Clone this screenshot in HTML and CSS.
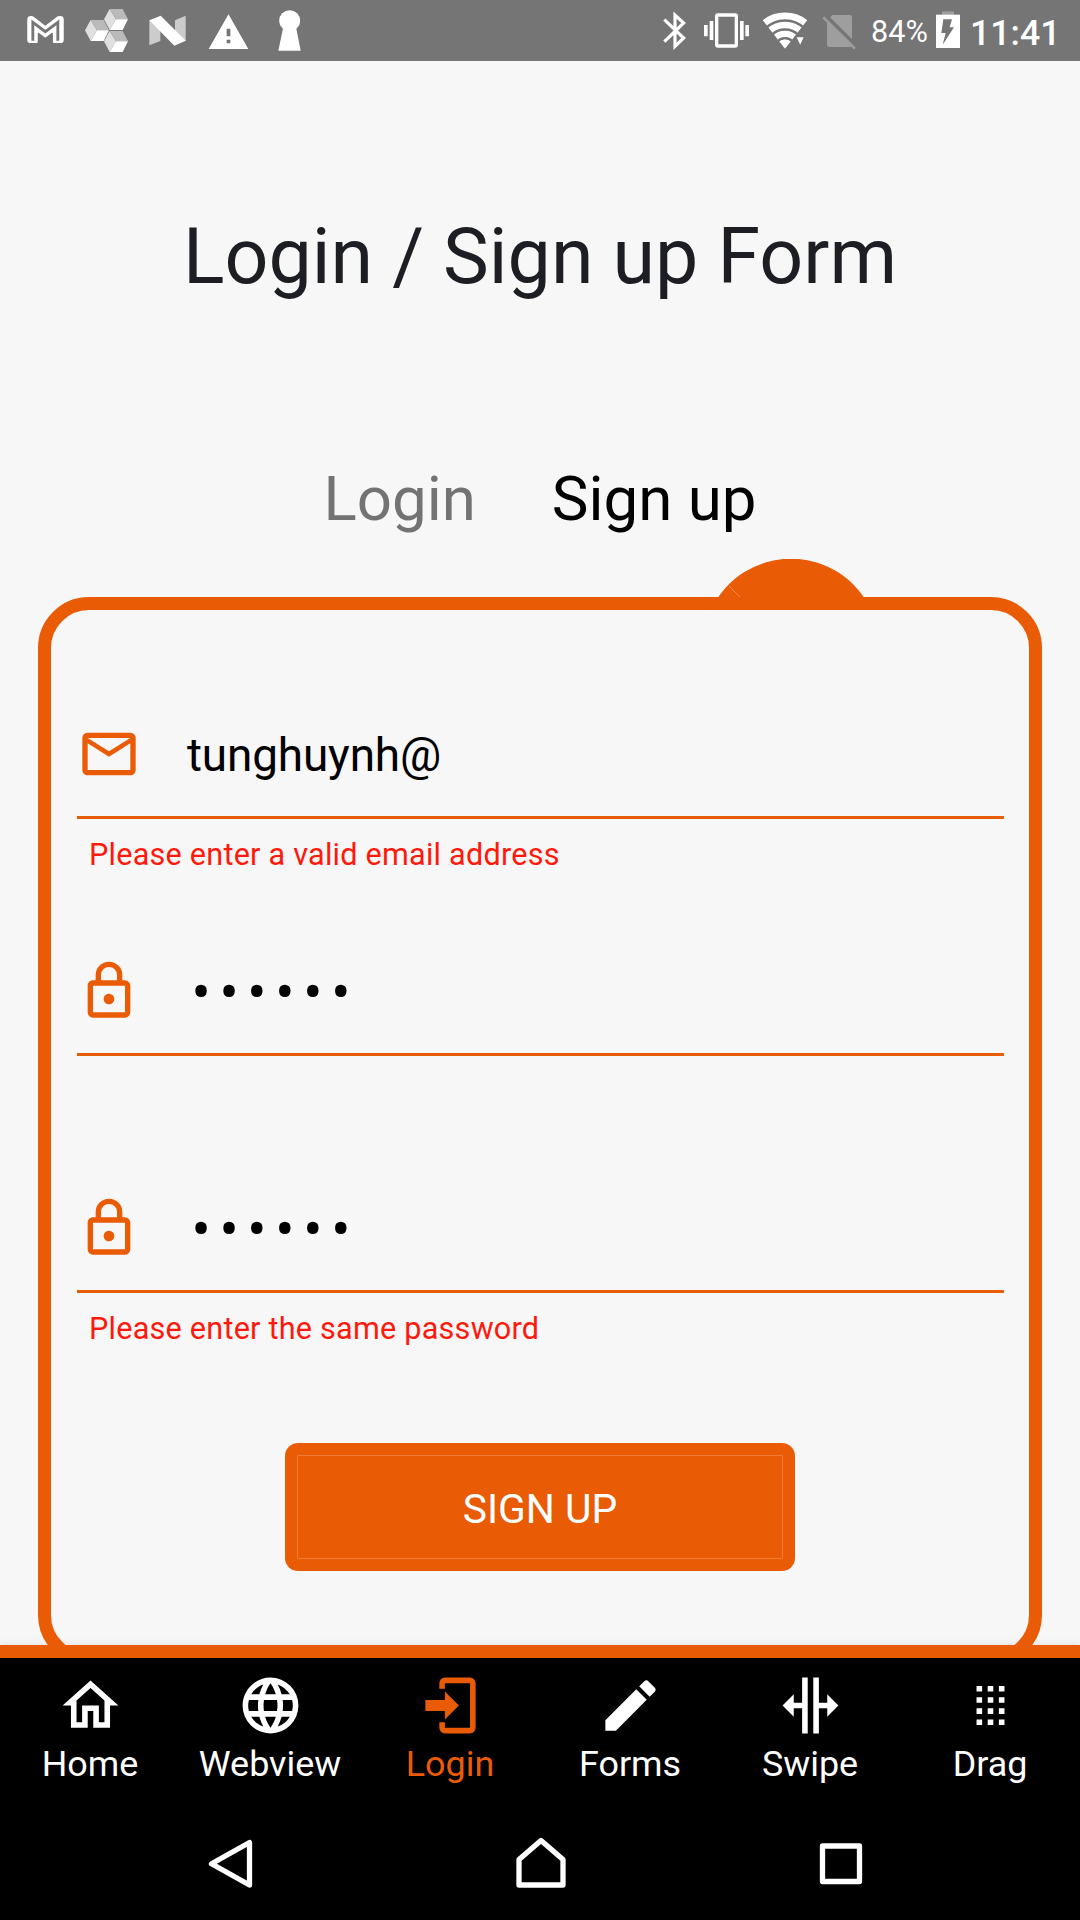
FILE: index.html
```
<!DOCTYPE html>
<html lang="en">
<head>
<meta charset="utf-8">
<title>Login / Sign up Form</title>
<link rel="stylesheet" href="styles.css">
</head>
<body>
<header class="status-bar">
  <div class="notifications">
    <svg class="s-mail" viewBox="81 0 111 183"><path d="M110 126H91Q85 126 85 120V58Q85 51 93 51L98 52L136 81L174 52L180 51Q188 51 188 58V120Q188 126 182 126H162V90L136 109L110 90Z" fill="#fff" stroke="#fff" stroke-width="6.5" stroke-linejoin="round"/><path d="M98.500 122V67L136 95L173.500 67V122" fill="none" stroke="#757575" stroke-width="8.500"/></svg>
    <svg class="s-cubes" viewBox="255 0 129 183"><defs><g id="cube"><path fill="#e0e0e0" d="M329 27L312 58L329 90L348 58Z"/><path fill="#bababa" d="M329 27H368L384 58H348Z"/><path fill="#fff" d="M348 58H384L368 90H329Z"/></g></defs><use href="#cube"/><use href="#cube" x="-57" y="33"/><use href="#cube" y="66"/></svg>
    <svg class="s-n" viewBox="447 0 111 183"><path fill="#ccc" d="M448 60L481 76V123L448 136ZM557 47L525 61V105L557 124Z"/><path fill="#fff" d="M448 61L482 47L557 122L523 137Z"/></svg>
    <svg class="s-warn" viewBox="624 0 123 183"><path fill="#fff" d="M685.500 43L745 147H626Z"/><path fill="#757575" d="M680 86h11v23h-11zM680 119h11v11h-11z"/></svg>
    <svg class="s-key" viewBox="834 0 69 183"><circle cx="869" cy="62" r="31.500" fill="#fff"/><path fill="#fff" d="M851 76H887L902 152H835Z"/></svg>
  </div>
  <div class="system">
    <svg class="s-bt" viewBox="69 0 69 183"><path d="M73 59L131 114L105 139V45L131 69L73 125" fill="none" stroke="#fff" stroke-width="9.500"/></svg>
    <svg class="s-vib" viewBox="192 0 135 183"><rect x="230" y="45" width="59" height="93" rx="4" fill="none" stroke="#fff" stroke-width="10"/><path fill="#fff" d="M192 75h11v34h-11zM209 63h11v57h-11zM300 63h11v57h-11zM316 75h11v34h-11z"/></svg>
    <svg class="s-wifi" viewBox="369 0 132 183"><defs><clipPath id="fan"><path d="M435 146L360 50V20H510V50Z"/></clipPath></defs><g clip-path="url(#fan)"><circle cx="435" cy="146" r="28" fill="#fff"/><g fill="none" stroke="#fff" stroke-width="20"><circle cx="435" cy="146" r="43.500"/><circle cx="435" cy="146" r="71"/><circle cx="435" cy="146" r="98.500"/></g><g fill="none" stroke="#757575"><circle cx="435" cy="146" r="32" stroke-width="6"/></g></g><path fill="#fff" d="M470 112H491L480.500 134Z"/></svg>
    <svg class="s-sim" viewBox="546 0 102 183"><path fill="#9e9e9e" d="M577 45H629Q636 45 636 52V133Q636 141 628 141H569Q561 141 561 133V61Z"/><path d="M556 46L652 141" stroke="#757575" stroke-width="11"/><path d="M550 52L645 146" stroke="#9e9e9e" stroke-width="7.500"/></svg>
    <span class="percent">84%</span>
    <svg class="s-batt" viewBox="888 0 72 183"><path fill="#9e9e9e" d="M906 34h36v11h-36z"/><path fill="#fff" d="M888 44h72v100h-72z"/><path fill="#757575" d="M910 58H936L929 82H942L908 134L917 99H904Z"/></svg>
    <span class="clock">11:41</span>
  </div>
</header>

<main class="screen">
  <h1 class="title">Login / Sign up Form</h1>
  <div class="modes">
    <span class="mode">Login</span>
    <span class="mode mode-active">Sign up</span>
  </div>
  <section class="card">
    <svg class="pointer" viewBox="0 0 160 51"><path d="M0 51A88 88 0 0 1 160 51Z" fill="#ea5b06"/><path d="M18 27L29 38" stroke="#f08a4c" stroke-width="1"/></svg>
    <div class="field">
      <div class="input-row">
        <svg class="field-icon" viewBox="0 0 24 24"><path d="M22 6C22 4.900 21.100 4 20 4H4C2.900 4 2 4.900 2 6V18C2 19.100 2.900 20 4 20H20C21.100 20 22 19.100 22 18V6M20 6L12 11L4 6H20M20 18H4V8L12 13L20 8V18Z"/></svg>
        <span class="value">tunghuynh@</span>
      </div>
      <p class="error">Please enter a valid email address</p>
    </div>
    <div class="field">
      <div class="input-row">
        <svg class="field-icon" viewBox="0 0 24 24"><path id="lock" d="M12,17C10.890,17 10,16.100 10,15C10,13.890 10.890,13 12,13A2,2 0 0,1 14,15A2,2 0 0,1 12,17M18,20V10H6V20H18M18,8A2,2 0 0,1 20,10V20A2,2 0 0,1 18,22H6C4.890,22 4,21.100 4,20V10C4,8.890 4.890,8 6,8H7V6A5,5 0 0,1 12,1A5,5 0 0,1 17,6V8H18M12,3A3,3 0 0,0 9,6V8H15V6A3,3 0 0,0 12,3Z"/></svg>
        <span class="value secret">••••••</span>
      </div>
    </div>
    <div class="field">
      <div class="input-row">
        <svg class="field-icon" viewBox="0 0 24 24"><use href="#lock"/></svg>
        <span class="value secret">••••••</span>
      </div>
      <p class="error">Please enter the same password</p>
    </div>
    <div class="submit"><span class="submit-inner">SIGN UP</span></div>
  </section>
</main>

<nav class="tabs">
  <div class="tab"><svg viewBox="0 0 24 24"><path d="M12 5.690L17 10.190V18H15V12H9V18H7V10.190L12 5.690M12 3L2 12H5V20H11V14H13V20H19V12H22"/></svg><span>Home</span></div>
  <div class="tab"><svg viewBox="0 0 24 24"><path d="M16.360,14C16.440,13.340 16.500,12.680 16.500,12C16.500,11.320 16.440,10.660 16.360,10H19.740C19.900,10.640 20,11.310 20,12C20,12.690 19.900,13.360 19.740,14M14.590,19.560C15.190,18.450 15.650,17.250 15.970,16H18.920C17.960,17.650 16.430,18.930 14.590,19.560M14.340,14H9.660C9.560,13.340 9.500,12.680 9.500,12C9.500,11.320 9.560,10.650 9.660,10H14.340C14.430,10.650 14.500,11.320 14.500,12C14.500,12.680 14.430,13.340 14.340,14M12,19.960C11.170,18.760 10.500,17.430 10.090,16H13.910C13.500,17.430 12.830,18.760 12,19.960M8,8H5.080C6.030,6.340 7.570,5.060 9.400,4.440C8.800,5.550 8.350,6.750 8,8M5.080,16H8C8.350,17.250 8.800,18.450 9.400,19.560C7.570,18.930 6.030,17.650 5.080,16M4.260,14C4.100,13.360 4,12.690 4,12C4,11.310 4.100,10.640 4.260,10H7.640C7.560,10.660 7.500,11.320 7.500,12C7.500,12.680 7.560,13.340 7.640,14M12,4.030C12.830,5.230 13.500,6.570 13.910,8H10.090C10.500,6.570 11.170,5.230 12,4.030M18.920,8H15.970C15.650,6.750 15.190,5.550 14.590,4.440C16.430,5.070 17.960,6.340 18.920,8M12,2C6.470,2 2,6.500 2,12A10,10 0 0,0 12,22A10,10 0 0,0 22,12A10,10 0 0,0 12,2Z"/></svg><span>Webview</span></div>
  <div class="tab tab-active"><svg viewBox="0 0 24 24"><path d="M10,17V14H3V10H10V7L15,12L10,17M10,2H19A2,2 0 0,1 21,4V20A2,2 0 0,1 19,22H10A2,2 0 0,1 8,20V18H10V20H19V4H10V6H8V4A2,2 0 0,1 10,2Z"/></svg><span>Login</span></div>
  <div class="tab"><svg viewBox="0 0 24 24"><path d="M20.710,7.040C21.100,6.650 21.100,6 20.710,5.630L18.370,3.290C18,2.900 17.350,2.900 16.960,3.290L15.120,5.120L18.870,8.870M3,17.250V21H6.750L17.810,9.930L14.060,6.180L3,17.250Z"/></svg><span>Forms</span></div>
  <div class="tab"><svg viewBox="0 0 24 24"><path d="M6 8L2 12L6 16V13H9V22H11V2H9V11H6ZM18 8L22 12L18 16V13H15V22H13V2H15V11H18Z"/></svg><span>Swipe</span></div>
  <div class="tab"><svg viewBox="0 0 24 24"><path d="M7 5h2v2H7zM11 5h2v2h-2zM15 5h2v2h-2zM7 9h2v2H7zM11 9h2v2h-2zM15 9h2v2h-2zM7 13h2v2H7zM11 13h2v2h-2zM15 13h2v2h-2zM7 17h2v2H7zM11 17h2v2h-2zM15 17h2v2h-2z"/></svg><span>Drag</span></div>
</nav>

<footer class="system-nav">
  <svg viewBox="200 1833 60 60"><path d="M249.500 1842.500V1885L211.500 1863.700Z"/></svg>
  <svg viewBox="510.500 1833 60 60"><path d="M518.500 1885V1859.500L540.500 1840.500L562.500 1859.500V1885Z"/></svg>
  <svg viewBox="811 1833 60 60"><path d="M822.500 1846H859.500V1881.500H822.500Z"/></svg>
</footer>
</body>
</html>
```
FILE: styles.css
```
* { box-sizing: border-box; }

body {
  margin: 0;
  width: 1080px;
  height: 1920px;
  overflow: hidden;
  display: flex;
  flex-direction: column;
  background: #f7f7f7;
  font-family: Roboto, sans-serif;
}

svg { display: block; flex: none; }

.status-bar {
  height: 61px;
  flex: none;
  display: flex;
  justify-content: space-between;
  padding: 0 24px 0 27px;
  background: #757575;
  color: #fff;
}
.notifications, .system { display: flex; }
.status-bar svg { height: 61px; }
.s-mail { width: 37px; }
.s-cubes { width: 43px; margin-left: 21px; }
.s-n { width: 37px; margin-left: 21px; }
.s-warn { width: 41px; margin-left: 22px; }
.s-key { width: 23px; margin-left: 29px; }
.s-bt { width: 23px; margin-right: 18px; }
.s-vib { width: 45px; margin-right: 14px; }
.s-wifi { width: 44px; margin-right: 15px; }
.s-sim { width: 34px; }
.s-batt { width: 24px; }
.percent {
  width: 80px;
  padding-left: 15px;
  font-size: 30.6px;
  line-height: 63px;
}
.clock {
  width: 96px;
  padding-left: 10px;
  font-size: 35.7px;
  font-weight: 500;
  line-height: 66px;
  white-space: nowrap;
}

.screen {
  height: 1584px;
  flex: none;
  overflow: hidden;
  display: flex;
  flex-direction: column;
}
.title {
  margin: 151px 0 0;
  text-align: center;
  font-size: 77.1px;
  font-weight: 400;
  line-height: 90px;
  color: #1c1e23;
}
.modes {
  display: flex;
  justify-content: center;
  gap: 76px;
  margin-top: 161px;
  font-size: 61.8px;
  line-height: 72px;
  color: #737373;
}
.mode-active { color: #000; }

.card {
  position: relative;
  flex: none;
  height: 1069px;
  margin: 62px 38px 0;
  padding: 81.5px 25px 0 26px;
  border: 13px solid #ea5b06;
  border-radius: 51px;
}
.pointer {
  position: absolute;
  top: -51px;
  left: 660px;
  width: 160px;
  height: 51px;
}
.field { height: 237px; }
.input-row {
  display: flex;
  align-items: center;
  height: 127.5px;
  border-bottom: 3px solid #ea5b06;
}
.field-icon {
  width: 64px;
  height: 64px;
  fill: #ea5b06;
}
.value {
  margin-left: 46px;
  padding-top: 2px;
  font-size: 45.9px;
  line-height: 56px;
  letter-spacing: -0.15px;
  color: #000;
}
.secret {
  margin-left: 50.5px;
  padding-top: 4px;
  font-size: 57px;
  letter-spacing: 8.7px;
}
.error {
  margin: 17.5px 0 0 12px;
  font-size: 30.6px;
  line-height: 36px;
  letter-spacing: 0.23px;
  color: #ff190c;
}
.submit {
  width: 510px;
  height: 128px;
  margin: 40.5px 0 0 208px;
  padding: 12px;
  border-radius: 13px;
  background: #ea5b06;
}
.submit-inner {
  display: block;
  height: 104px;
  border: 1px solid #ee7b38;
  border-radius: 1px;
  text-align: center;
  font-size: 40.8px;
  line-height: 106px;
  color: #fff;
}

.tabs {
  flex: none;
  height: 180px;
  display: grid;
  grid-template-columns: repeat(6, 1fr);
  border-top: 13px solid #ea5b06;
  background: #000;
  color: #fff;
  box-shadow: 0 0 8px rgba(0, 0, 0, .1);
}
.tab {
  display: flex;
  flex-direction: column;
  align-items: center;
  padding-top: 14px;
  font-size: 35.9px;
  line-height: 42px;
}
.tab svg {
  width: 67px;
  height: 67px;
  margin-bottom: 4px;
  fill: currentColor;
}
.tab-active { color: #ea5b06; }

.system-nav {
  flex: 1;
  display: flex;
  padding: 8px 0 0 200px;
  background: #000;
}
.system-nav svg {
  width: 60px;
  height: 60px;
  margin-right: 240px;
  fill: none;
  stroke: #fff;
  stroke-width: 5.3;
  stroke-linejoin: round;
}
.system-nav svg:first-child { margin-right: 250.5px; }
```
